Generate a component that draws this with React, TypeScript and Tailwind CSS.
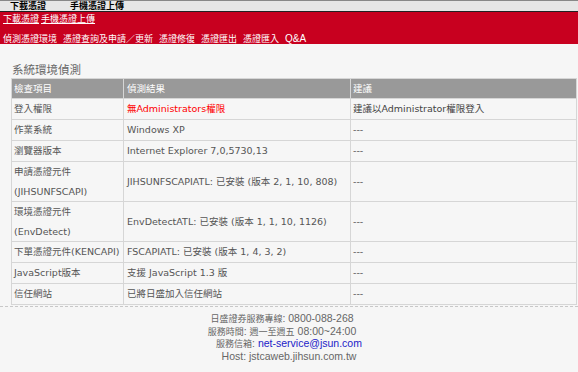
import React from "react";

const cjk = { fontFamily: '"DejaVu Sans", "Noto Sans CJK TC", sans-serif' };
const foot = { fontFamily: '"Liberation Sans", "Noto Sans CJK TC", sans-serif' };

type Row = { a: React.ReactNode; b: React.ReactNode; c: React.ReactNode; two?: boolean };

const rows: Row[] = [
  {
    a: "登入權限",
    b: <span className="text-[#ff0000]">無Administrators權限</span>,
    c: <span className="text-[#444]">建議以Administrator權限登入</span>,
  },
  { a: "作業系統", b: "Windows XP", c: "---" },
  { a: "瀏覽器版本", b: "Internet Explorer 7,0,5730,13", c: "---" },
  {
    a: (
      <>
        申請憑證元件
        <br />
        (JIHSUNFSCAPI)
      </>
    ),
    b: "JIHSUNFSCAPIATL: 已安裝 (版本 2, 1, 10, 808)",
    c: "---",
    two: true,
  },
  {
    a: (
      <>
        環境憑證元件
        <br />
        (EnvDetect)
      </>
    ),
    b: "EnvDetectATL: 已安裝 (版本 1, 1, 10, 1126)",
    c: "---",
    two: true,
  },
  { a: "下單憑證元件(KENCAPI)", b: "FSCAPIATL: 已安裝 (版本 1, 4, 3, 2)", c: "---" },
  { a: "JavaScript版本", b: "支援 JavaScript 1.3 版", c: "---" },
  { a: "信任網站", b: "已將日盛加入信任網站", c: "---" },
];

export default function App() {
  return (
    <div className="w-[578px] h-[372px] overflow-hidden bg-[#f6f6f6]" style={cjk}>
      {/* top bar */}
      <div className="h-[12px] bg-[#e6e6e6] border-t border-[#888] border-b border-b-[#222] flex items-center text-[9px] font-bold text-black leading-none">
        <span className="ml-[10px]">下載憑證</span>
        <span className="ml-[24px]">手機憑證上傳</span>
      </div>
      {/* red band */}
      <div className="h-[32px] bg-[#c8001f] text-white text-[9px] leading-none flex flex-col">
        <div className="flex gap-[2px] pl-[3px] pt-[3px]">
          <span className="underline">下載憑證</span>
          <span className="underline">手機憑證上傳</span>
        </div>
        <div className="flex items-end gap-[6px] pl-[3px] mt-[10px]">
          <span>偵測憑證環境</span>
          <span>憑證查詢及申請／更新</span>
          <span>憑證修復</span>
          <span>憑證匯出</span>
          <span>憑證匯入</span>
          <span className="text-[10px]" style={foot}>Q&amp;A</span>
        </div>
      </div>

      <div className="pl-[11px] pr-[2px]">
        <div className="text-[11.5px] text-[#666] mt-[18px] leading-[16px] pl-[1px]">系統環境偵測</div>
        <table className="w-[565px] border-collapse text-[9.5px] text-[#555] table-fixed">
          <colgroup>
            <col className="w-[112px]" />
            <col className="w-[227px]" />
            <col className="w-[226px]" />
          </colgroup>
          <thead>
            <tr className="bg-[#999999] text-white">
              <th className="font-normal text-left px-[2px] leading-[19px] border border-[#d6d6d6]">檢查項目</th>
              <th className="font-normal text-left px-[3px] leading-[19px] border border-[#d6d6d6]">偵測結果</th>
              <th className="font-normal text-left px-[2px] leading-[19px] border border-[#d6d6d6]">建議</th>
            </tr>
          </thead>
          <tbody>
            {rows.map((r, i) => (
              <tr key={i}>
                <td className={`px-[2px] border border-[#d6d6d6] align-middle whitespace-nowrap ${r.two ? "leading-[19.5px]" : "leading-[20px]"}`}>{r.a}</td>
                <td className="px-[3px] leading-[20px] border border-[#d6d6d6] align-middle whitespace-nowrap">{r.b}</td>
                <td className="px-[2px] leading-[20px] border border-[#d6d6d6] align-middle whitespace-nowrap">{r.c}</td>
              </tr>
            ))}
          </tbody>
        </table>
      </div>
      <div className="border-t border-dashed border-[#c8c8c8] mt-[1px]" />
      <div className="text-center text-[10.5px] leading-[11.7px] text-[#666] mt-[6px]" style={foot}>
        <div className="pr-[14px]">
          <span className="text-[9px]">日盛證券服務專線</span>: 0800-088-268
        </div>
        <div className="pr-[14px]">
          <span className="text-[9px]">服務時間</span>: <span className="text-[9px]">週一至週五</span> 08:00~24:00
        </div>
        <div>
          <span className="text-[9px]">服務信箱</span>: <span className="text-[#2222c8]">net-service@jsun.com</span>
        </div>
        <div>Host: jstcaweb.jihsun.com.tw</div>
      </div>
    </div>
  );
}
